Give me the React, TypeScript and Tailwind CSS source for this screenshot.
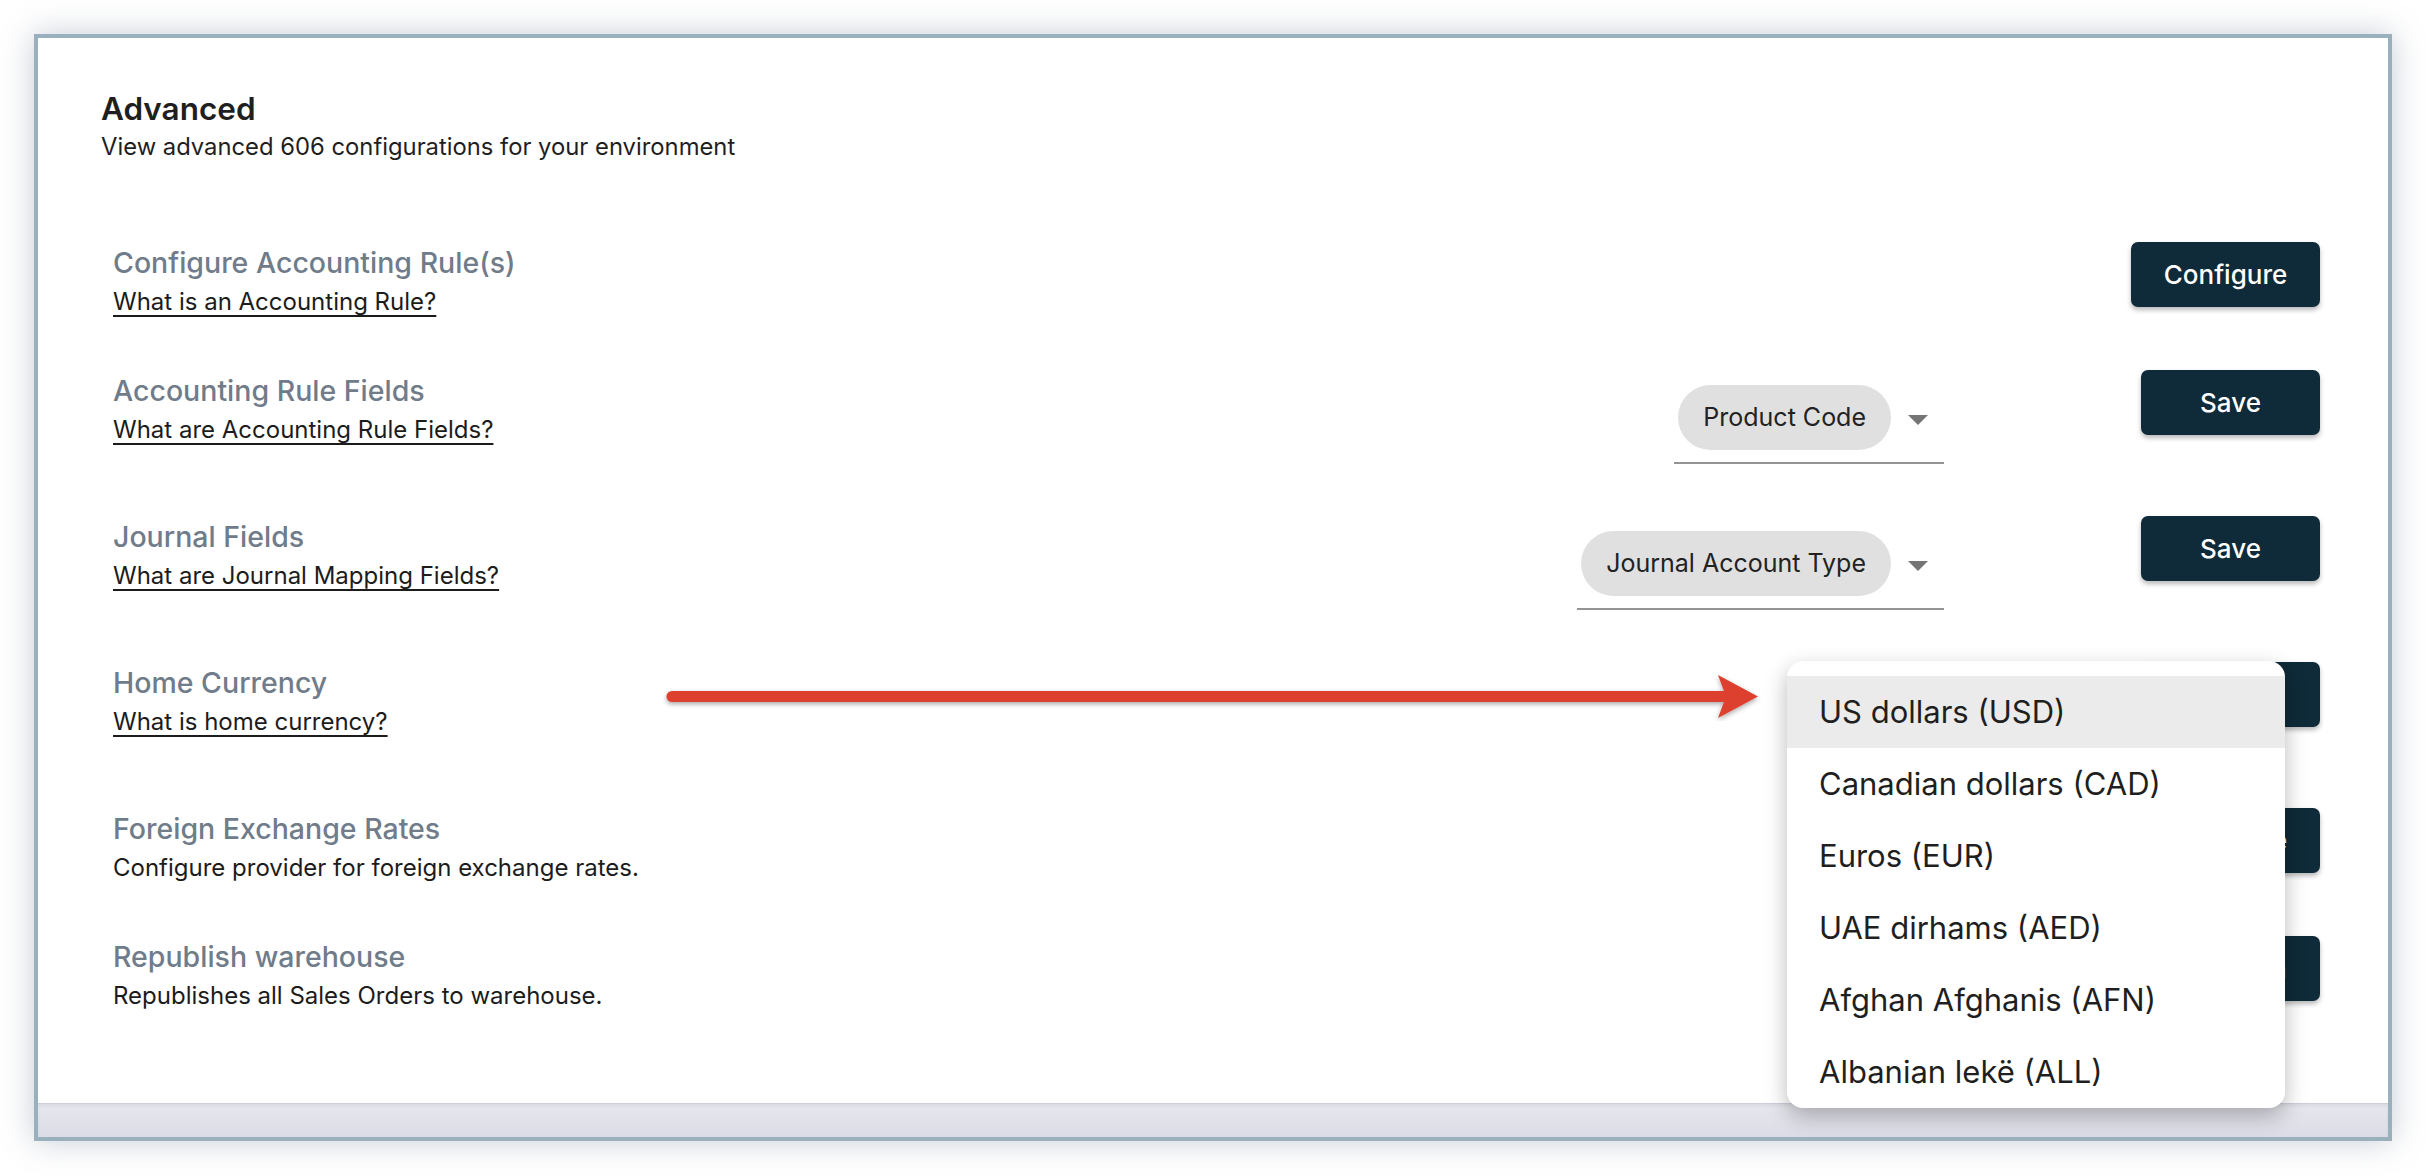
import React from "react";

const currencies = [
  "US dollars (USD)",
  "Canadian dollars (CAD)",
  "Euros (EUR)",
  "UAE dirhams (AED)",
  "Afghan Afghanis (AFN)",
  "Albanian lekë (ALL)",
];

function ActionButton({ label, width }: { label: string; width: string }) {
  return (
    <button
      className={`${width} -mt-[3px] h-[65px] shrink-0 rounded-[7px] bg-[#0f2a38] text-[26px] font-medium text-white shadow-[0_3px_5px_rgba(0,0,0,0.28)] flex items-center justify-center`}
    >
      {label}
    </button>
  );
}

function ChipSelect({ value }: { value: string }) {
  return (
    <div className="mr-[197px] flex items-center border-b-2 border-[#949494] pl-[4px] pt-[12px] pb-[12px]">
      <span className="flex h-[65px] items-center rounded-full bg-[#e0e0e0] px-[25px] text-[25px] text-[#222]">
        {value}
      </span>
      <span className="flex w-[53px] justify-center pt-[4px]">
        <svg width="20" height="10" viewBox="0 0 20 10">
          <path d="M0 0 L20 0 L10 10 Z" fill="#757575" />
        </svg>
      </span>
    </div>
  );
}

function Row({
  title,
  sub,
  link,
  children,
}: {
  title: string;
  sub: string;
  link?: boolean;
  children?: React.ReactNode;
}) {
  return (
    <div className="flex items-start justify-between">
      <div className="flex min-h-[73px] flex-col">
        <div className="text-[28.5px] leading-[36px] font-medium text-[#707c8a]">{title}</div>
        <div
          className={`mt-[6px] text-[24px] leading-[30px] text-[#1c1c1c] ${
            link ? "underline decoration-[1.5px] underline-offset-[5px]" : ""
          }`}
        >
          {sub}
        </div>
      </div>
      <div className="flex items-start">{children}</div>
    </div>
  );
}

export default function App() {
  return (
    <div className="h-[1176px] w-full bg-white pl-[34px] pt-[34px] font-['Inter',sans-serif]">
      <div className="relative flex h-[1107px] w-[2358px] flex-col border-4 border-[#9bb0bd] bg-white shadow-[0_0_30px_rgba(90,110,135,0.35)]">
        <div className="flex-1">
          <div className="pl-[63px] pt-[53px]">
            <h1 className="text-[31.5px] leading-[36px] font-semibold text-[#1f1f1f]">Advanced</h1>
            <p className="mt-[5px] text-[23.8px] leading-[30px] text-[#1f1f1f]">
              View advanced 606 configurations for your environment
            </p>
          </div>

          <div className="mt-[83px] flex flex-col gap-[55px] pl-[75px] pr-[68px]">
            <Row title="Configure Accounting Rule(s)" sub="What is an Accounting Rule?" link>
              <ActionButton label="Configure" width="w-[189px]" />
            </Row>
            <Row title="Accounting Rule Fields" sub="What are Accounting Rule Fields?" link>
              <ChipSelect value="Product Code" />
              <ActionButton label="Save" width="w-[179px]" />
            </Row>
            <Row title="Journal Fields" sub="What are Journal Mapping Fields?" link>
              <ChipSelect value="Journal Account Type" />
              <ActionButton label="Save" width="w-[179px]" />
            </Row>
            <Row title="Home Currency" sub="What is home currency?" link>
              <div className="mr-[197px] h-[91px] w-[150px]" />
              <ActionButton label="Save" width="w-[179px]" />
            </Row>
            <Row title="Foreign Exchange Rates" sub="Configure provider for foreign exchange rates.">
              <ActionButton label="Configure" width="w-[189px]" />
            </Row>
            <Row title="Republish warehouse" sub="Republishes all Sales Orders to warehouse.">
              <ActionButton label="Republish" width="w-[189px]" />
            </Row>
          </div>
        </div>

        <div className="h-[34px] border-t border-[#cdced8] bg-gradient-to-b from-[#e7e7ef] to-[#dcdce6] shadow-[inset_0_2px_3px_rgba(0,0,0,0.06)]" />

        {/* annotation arrow */}
        <svg
          className="absolute left-[624px] top-[637px]"
          width="1100"
          height="46"
          viewBox="0 0 1100 46"
        >
          <defs>
            <filter id="sh" x="-5%" y="-50%" width="110%" height="200%">
              <feDropShadow dx="0" dy="2" stdDeviation="2.5" floodColor="#000" floodOpacity="0.35" />
            </filter>
          </defs>
          <g filter="url(#sh)">
            <path d="M10 16 L1070 16 L1070 27 L10 27 A5.5 5.5 0 0 1 10 16 Z" fill="#dd412d" />
            <path d="M1056 0 L1096 21.5 L1056 43 L1064 21.5 Z" fill="#dd412d" />
          </g>
        </svg>

        {/* open currency menu */}
        <div className="absolute left-[1749px] top-[623px] w-[498px] overflow-hidden rounded-[16px] bg-white pt-[15px] shadow-[0_8px_22px_rgba(0,0,0,0.28)]">
          {currencies.map((c, i) => (
            <div
              key={c}
              className={`flex h-[72px] items-center pl-[32px] text-[31px] text-[#1f1f1f] ${
                i === 0 ? "bg-[#ebebeb]" : ""
              }`}
            >
              {c}
            </div>
          ))}
        </div>
      </div>
    </div>
  );
}
